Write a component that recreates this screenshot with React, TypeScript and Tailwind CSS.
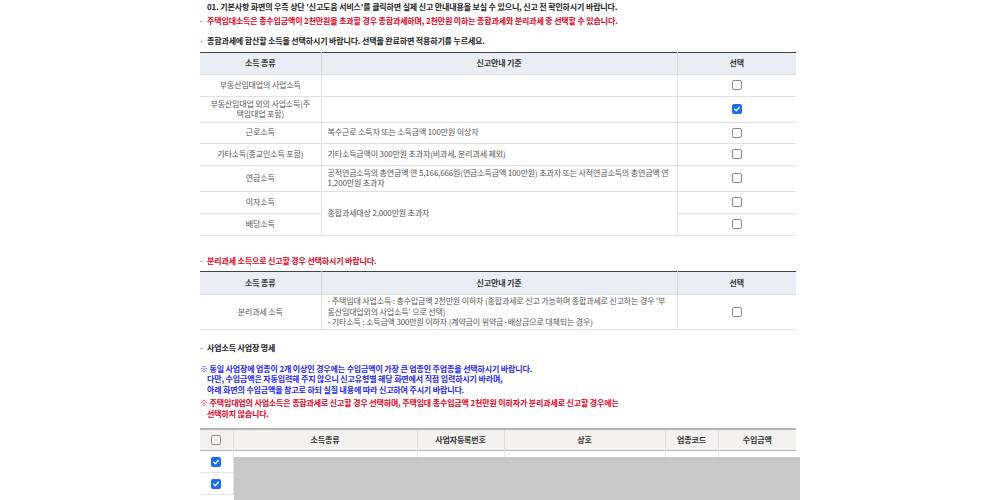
import React from 'react';

const Box: React.FC<{ checked?: boolean }> = ({ checked }) =>
  checked ? (
    <span className="inline-flex w-[10px] h-[10px] rounded-[2px] bg-[#1a6ef5] items-center justify-center align-middle">
      <svg viewBox="0 0 10 10" className="w-[8px] h-[8px]">
        <path d="M2 5.2 L4.1 7.2 L8 2.8" fill="none" stroke="#fff" strokeWidth="1.6" strokeLinecap="round" strokeLinejoin="round" />
      </svg>
    </span>
  ) : (
    <span className="inline-block w-[10px] h-[10px] rounded-[2px] border border-[#8a8a8a] bg-white align-middle" />
  );

const th = 'border-l border-[#d4d8de] first:border-l-0 font-bold text-[#333] text-center';
const td = 'border-l border-t border-[#e1e1e1] first:border-l-0 text-[#555]';

export default function App() {
  return (
    <div className="w-[1000px] h-[500px] overflow-hidden bg-white text-[8px] leading-[10.5px] tracking-[-0.15px] text-[#222]" style={{ fontFamily: '"Noto Sans CJK KR", "Noto Sans", sans-serif' }}>
      <div className="w-[596px] ml-[200px] pt-[2px]">
        <p className="pl-[7px] font-bold">01. 기본사항 화면의 우측 상단 '신고도움 서비스'를 클릭하면 실제 신고 안내내용을 보실 수 있으니, 신고 전 확인하시기 바랍니다.</p>
        <p className="mt-[3.5px] font-bold text-[#e4001c]">
          <span className="inline-block w-[7px] text-[#999]">-</span>주택임대소득은 총수입금액이 2천만원을 초과할 경우 종합과세하며, 2천만원 이하는 종합과세와 분리과세 중 선택할 수 있습니다.
        </p>
        <p className="mt-[9.5px] font-bold">
          <span className="inline-block w-[7px] text-[#999]">-</span>종합과세에 합산할 소득을 선택하시기 바랍니다. 선택을 완료하면 적용하기를 누르세요.
        </p>

        <table className="mt-[5px] w-full border-collapse border-t-[1.5px] border-t-[#444] border-b border-b-[#e1e1e1] table-fixed">
          <colgroup>
            <col className="w-[121px]" />
            <col className="w-[356px]" />
            <col />
          </colgroup>
          <thead className="bg-[#e9eef6]">
            <tr>
              <th className={`${th} h-[22px]`}>소득 종류</th>
              <th className={`${th} h-[22px]`}>신고안내 기준</th>
              <th className={`${th} h-[22px]`}>선택</th>
            </tr>
          </thead>
          <tbody>
            <tr className="h-[22px]">
              <td className={`${td} text-center`}>부동산임대업의 사업소득</td>
              <td className={td}></td>
              <td className={`${td} text-center`}><Box /></td>
            </tr>
            <tr className="h-[26px]">
              <td className={`${td} text-center`}>부동산임대업 외의 사업소득(주<br />택임대업 포함)</td>
              <td className={td}></td>
              <td className={`${td} text-center`}><Box checked /></td>
            </tr>
            <tr className="h-[21px]">
              <td className={`${td} text-center`}>근로소득</td>
              <td className={`${td} pl-[6px]`}>복수근로 소득자 또는 소득금액 100만원 이상자</td>
              <td className={`${td} text-center`}><Box /></td>
            </tr>
            <tr className="h-[22px]">
              <td className={`${td} text-center`}>기타소득(종교인소득 포함)</td>
              <td className={`${td} pl-[6px]`}>기타소득금액이 300만원 초과자(비과세, 분리과세 제외)</td>
              <td className={`${td} text-center`}><Box /></td>
            </tr>
            <tr className="h-[26px]">
              <td className={`${td} text-center`}>연금소득</td>
              <td className={`${td} pl-[6px]`}>공적연금소득의 총연금액 연 5,166,666원(연금소득금액 100만원) 초과자 또는 사적연금소득의 총연금액 연<br />1,200만원 초과자</td>
              <td className={`${td} text-center`}><Box /></td>
            </tr>
            <tr className="h-[22px]">
              <td className={`${td} text-center`}>이자소득</td>
              <td className={`${td} pl-[6px]`} rowSpan={2}>종합과세대상 2,000만원 초과자</td>
              <td className={`${td} text-center`}><Box /></td>
            </tr>
            <tr className="h-[22px]">
              <td className={`${td} text-center`}>배당소득</td>
              <td className={`${td} text-center`}><Box /></td>
            </tr>
          </tbody>
        </table>

        <p className="mt-[20px] font-bold text-[#e4001c]">
          <span className="inline-block w-[7px] text-[#999]">-</span>분리과세 소득으로 신고할 경우 선택하시기 바랍니다.
        </p>
        <table className="mt-[5px] w-full border-collapse border-t-[1.5px] border-t-[#444] border-b border-b-[#e1e1e1] table-fixed">
          <colgroup>
            <col className="w-[121px]" />
            <col className="w-[356px]" />
            <col />
          </colgroup>
          <thead className="bg-[#e9eef6]">
            <tr>
              <th className={`${th} h-[23px]`}>소득 종류</th>
              <th className={`${th} h-[23px]`}>신고안내 기준</th>
              <th className={`${th} h-[23px]`}>선택</th>
            </tr>
          </thead>
          <tbody>
            <tr className="h-[35px]">
              <td className={`${td} text-center`}>분리과세 소득</td>
              <td className={`${td} pl-[6px]`}>
                - 주택임대 사업소득 : 총수입금액 2천만원 이하자 (종합과세로 신고 가능하며 종합과세로 신고하는 경우 '부<br />
                동산임대업외의 사업소득' 으로 선택)<br />
                - 기타소득 : 소득금액 300만원 이하자 (계약금이 위약금·배상금으로 대체되는 경우)
              </td>
              <td className={`${td} text-center`}><Box /></td>
            </tr>
          </tbody>
        </table>

        <p className="mt-[13px] font-bold">
          <span className="inline-block w-[7px] text-[#999]">-</span>사업소득 사업장 명세
        </p>
        <div className="mt-[10px] font-bold text-[#1f1ff0] leading-[10.5px]">
          <p>※ 동일 사업장에 업종이 2개 이상인 경우에는 수입금액이 가장 큰 업종인 주업종을 선택하시기 바랍니다.</p>
          <p className="pl-[7px]">다만, 수입금액은 자동입력해 주지 않으니 신고유형별 해당 화면에서 직접 입력하시기 바라며,</p>
          <p className="pl-[7px]">아래 화면의 수입금액을 참고로 하되 실질 내용에 따라 신고하여 주시기 바랍니다.</p>
        </div>
        <div className="mt-[1.5px] font-bold text-[#e4001c] leading-[11px]">
          <p>※ 주택임대업의 사업소득은 종합과세로 신고할 경우 선택하며, 주택임대 총수입금액 2천만원 이하자가 분리과세로 신고할 경우에는</p>
          <p className="pl-[7px]">선택하지 않습니다.</p>
        </div>

        <div className="relative mt-[9px]">
          <table className="w-full border-collapse border-t-2 border-t-[#b4b4b4] table-fixed">
            <colgroup>
              <col className="w-[33px]" />
              <col className="w-[184px]" />
              <col className="w-[87px]" />
              <col className="w-[161px]" />
              <col className="w-[53px]" />
              <col />
            </colgroup>
            <thead className="bg-[#f3f2f1]">
              <tr className="border-b border-b-[#b4b4b4]">
                <th className="h-[22px] text-center"><Box /></th>
                <th className="border-l border-[#e2e0de] font-bold text-[#333]">소득종류</th>
                <th className="border-l border-[#e2e0de] font-bold text-[#333]">사업자등록번호</th>
                <th className="border-l border-[#e2e0de] font-bold text-[#333]">상호</th>
                <th className="border-l border-[#e2e0de] font-bold text-[#333]">업종코드</th>
                <th className="border-l border-[#e2e0de] font-bold text-[#333]">수입금액</th>
              </tr>
            </thead>
            <tbody>
              {[0, 1].map(i => (
                <tr key={i} className="h-[22px] border-b border-b-[#e6e6e6]">
                  <td className="text-center"><Box checked /></td>
                  <td className="border-l border-[#e6e6e6]"></td>
                  <td className="border-l border-[#e6e6e6]"></td>
                  <td className="border-l border-[#e6e6e6]"></td>
                  <td className="border-l border-[#e6e6e6]"></td>
                  <td className="border-l border-[#e6e6e6]"></td>
                </tr>
              ))}
            </tbody>
          </table>
          <div className="absolute left-[34px] top-[29px] w-[566px] h-[60px] bg-[#c8c8c8]" />
        </div>
      </div>
    </div>
  );
}
